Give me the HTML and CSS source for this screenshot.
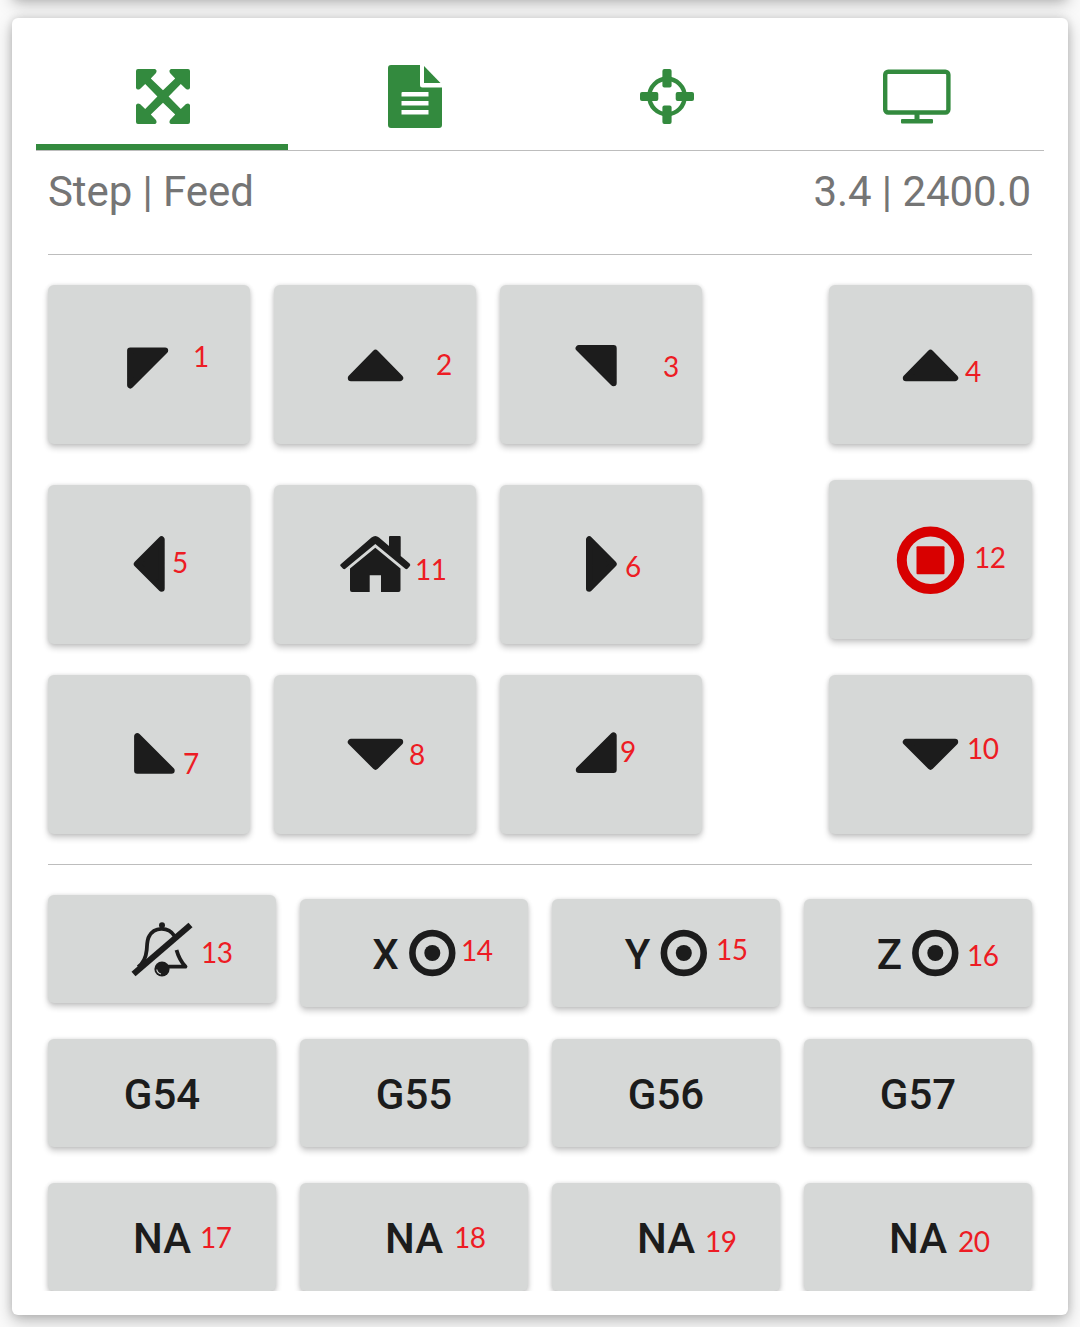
FILE: index.html
```html
<!DOCTYPE html>
<html lang="en">
<head>
<meta charset="utf-8">
<title>Jog panel</title>
<link rel="stylesheet" href="styles.css">
</head>
<body>
<div class="previous-card"></div>
<main class="card">
  <nav class="tabs">
    <a class="tab active"><svg width="54" height="55" viewBox="0 0 54 55"><path d="M2 0H19Q21.5 1 20 4L14.8 9.5 27 21.3 39.2 9.5 34 4Q32.5 1 35 0H52Q54 0 54 2V19Q53 21.5 50 20L44.8 15 32.6 27.5 44.8 40 50 35Q53 33.5 54 36V53Q54 55 52 55H35Q32.5 54 34 51L39.2 45.5 27 33.7 14.8 45.5 20 51Q21.5 54 19 55H2Q0 55 0 53V36Q1 33.5 4 35L9.2 40 21.4 27.5 9.2 15 4 20Q1 21.5 0 19V2Q0 0 2 0Z"/></svg></a>
    <a class="tab"><svg width="54" height="63" viewBox="0 0 54 63"><path fill-rule="evenodd" d="M3 0H32V20Q32 22.5 34.500 22.500H54V60Q54 63 51 63H3Q0 63 0 60V3Q0 0 3 0ZM14.500 27Q13.500 27 13.500 28V31.500H40.500V27ZM13.500 36V40.500H40.500V36ZM13.500 45V49.500H40.500V45Z"/><path d="M36 1 52.500 18H36Z"/></svg></a>
    <a class="tab"><svg width="54" height="55" viewBox="0 0 54 55"><circle class="ring" cx="27" cy="27.500" r="17.700"/><rect y="23" width="18.300" height="9" rx="2"/><rect x="35.700" y="23" width="18.300" height="9" rx="2"/><rect x="22.400" width="9.200" height="18.500" rx="2"/><rect x="22.400" y="36.500" width="9.200" height="18.500" rx="2"/></svg></a>
    <a class="tab"><svg class="screen" width="68" height="55" viewBox="0 0 68 55"><rect class="ring" x="2.200" y="2.700" width="63.200" height="40.800" rx="3"/><path d="M31.500 44H36.500V50H49Q50 50 50 51V53.500Q50 54.500 49 54.500H19Q18 54.500 18 53.500V51Q18 50 19 50H31.500Z"/></svg></a>
  </nav>
  <section class="panel">
    <div class="status"><span>Step | Feed</span><span>3.4 | 2400.0</span></div>
    <div class="jog">
      <div class="axes">
        <button class="key"><svg class="arrow" viewBox="0 0 100 80"><path d="M31.300 25.600H66L31.300 60.300Z"/></svg></button>
        <button class="key"><svg class="arrow" viewBox="0 0 100 80"><path d="M50.500 28 75 53H26Z"/></svg></button>
        <button class="key"><svg class="arrow" viewBox="0 0 100 80"><path d="M27.800 23.300H62.500V58Z"/></svg></button>
        <button class="key"><svg class="arrow" viewBox="0 0 100 80"><path d="M38 39 62.500 14.500V63.500Z"/></svg></button>
        <button class="key"><svg viewBox="0 0 100 80"><path d="M16 39 46.500 12.500Q50.300 9.500 54 12.500L64 21V12Q64 11 65 11H74.700Q75.700 11 75.700 12V31L84.600 38.500Q86 40 84.700 41.200L82.500 43.800Q81.300 44.700 80.300 43.800L50.300 19 20.300 43.800Q19.300 44.700 18.100 43.800L15.500 41Q14.500 40 16 39ZM50.300 22.700 75.500 43.500V65Q75.500 67 73.500 67H56V50.300H44.700V67H27Q25 67 25 65V43.500Z"/></svg></button>
        <button class="key"><svg class="arrow" viewBox="0 0 100 80"><path d="M62.500 39 38.200 14.500V63.500Z"/></svg></button>
        <button class="key"><svg class="arrow" viewBox="0 0 100 80"><path d="M38.300 21.300V55.500H72.500Z"/></svg></button>
        <button class="key"><svg class="arrow" viewBox="0 0 100 80"><path d="M26 27H75L50.500 51.500Z"/></svg></button>
        <button class="key"><svg class="arrow" viewBox="0 0 100 80"><path d="M62.500 20.600V54.800H28Z"/></svg></button>
      </div>
      <div class="z-axis">
        <button class="key"><svg class="arrow" viewBox="0 0 100 80"><path d="M49.500 28 74 53H25Z"/></svg></button>
        <button class="key stop"><svg viewBox="0 0 100 80"><circle class="stop-ring" cx="49.500" cy="40.300" r="28.700"/><rect x="35.500" y="26.300" width="28" height="28" rx="1"/></svg></button>
        <button class="key"><svg class="arrow" viewBox="0 0 100 80"><path d="M25 27H74L49.500 51.500Z"/></svg></button>
      </div>
    </div>
    <div class="commands">
      <button class="key mute"><svg viewBox="0 0 100 80"><circle cx="50" cy="16.200" r="3"/><g class="bell"><path d="M26 58C32 54 34 48 34.700 41C35.200 35 35 31 37 27.500C42 18 56 17 62.500 27"/><path d="M64.500 41C66.500 48 69 53 73.500 57.600H47"/></g><circle cx="50" cy="60" r="7.600"/><path class="glint" d="M44.800 60.500Q45.300 64 49 65"/><path class="slash" d="M21.500 65 78.500 16"/></svg></button>
      <button class="key">X<svg class="target" viewBox="0 0 48 48"><circle class="target-ring" cx="24.300" cy="24" r="19.900"/><circle cx="24.300" cy="24" r="8"/></svg></button>
      <button class="key">Y<svg class="target" viewBox="0 0 48 48"><circle class="target-ring" cx="24.800" cy="24" r="19.900"/><circle cx="24.800" cy="24" r="8"/></svg></button>
      <button class="key">Z<svg class="target" viewBox="0 0 48 48"><circle class="target-ring" cx="24.300" cy="24" r="19.900"/><circle cx="24.300" cy="24" r="8"/></svg></button>
      <button class="key">G54</button>
      <button class="key">G55</button>
      <button class="key">G56</button>
      <button class="key">G57</button>
      <button class="key">NA</button>
      <button class="key">NA</button>
      <button class="key">NA</button>
      <button class="key">NA</button>
    </div>
  </section>
</main>
<div class="pins">
  <span class="pin p1">1</span><span class="pin p2">2</span><span class="pin p3">3</span><span class="pin p4">4</span>
  <span class="pin p5">5</span><span class="pin p6">6</span><span class="pin p7">7</span><span class="pin p8">8</span>
  <span class="pin p9">9</span><span class="pin p10">10</span><span class="pin p11">11</span><span class="pin p12">12</span>
  <span class="pin p13">13</span><span class="pin p14">14</span><span class="pin p15">15</span><span class="pin p16">16</span>
  <span class="pin p17">17</span><span class="pin p18">18</span><span class="pin p19">19</span><span class="pin p20">20</span>
</div>
</body>
</html>
```
FILE: styles.css
```css
* { box-sizing: border-box; }
body {
  margin: 0;
  height: 1327px;
  padding: 0 12px;
  position: relative;
  overflow: hidden;
  background: #fafafa;
  font-family: Roboto, "Liberation Sans", sans-serif;
}
.previous-card, .card {
  background: #fff;
  border-radius: 6px;
  box-shadow: 0 6px 16px rgba(0, 0, 0, .25), 0 0 8px rgba(0, 0, 0, .14);
}
.previous-card { height: 20px; margin-top: -22px; }
.card { height: 1297px; margin-top: 20px; padding: 24px; }

.tabs {
  display: grid;
  grid-template-columns: repeat(4, 1fr);
  height: 109px;
  border-bottom: 1px solid #bdbdbd;
}
.tab {
  display: flex;
  align-items: center;
  justify-content: center;
  padding-left: 2px;
  border-bottom: 6px solid transparent;
  padding-top: 7px;
  fill: #338a3e;
}
.tab.active { border-bottom-color: #338a3e; }
.ring { fill: none; stroke: #338a3e; stroke-width: 4.4; }
.screen { margin-left: -4px; }

.panel { height: 1140px; padding: 16px 12px 0; overflow: hidden; }
.status {
  display: flex;
  justify-content: space-between;
  height: 88px;
  border-bottom: 1px solid #bdbdbd;
  color: #757575;
  font-size: 42px;
  line-height: 50px;
  letter-spacing: -.08px;
}
.status span:last-child { padding-right: 1px; }
.jog {
  display: flex;
  justify-content: space-between;
  height: 610px;
  padding-top: 30px;
  border-bottom: 1px solid #bdbdbd;
}
.axes {
  display: grid;
  grid-template: 200px 190px 160px / repeat(3, 202px);
  column-gap: 24px;
}
.z-axis { display: grid; grid-template: 195px 195px 160px / 203px; }
.key {
  display: flex;
  align-items: center;
  justify-content: center;
  gap: 9px;
  height: 159px;
  padding: 3px 0 0;
  border: 0;
  border-radius: 6px;
  background: #d6d8d7;
  box-shadow: 0 4px 6px rgba(0, 0, 0, .2), 0 0 4px rgba(0, 0, 0, .12);
  color: #1c1c1c;
  fill: #1c1c1c;
  font: 500 42px Roboto, "Liberation Sans", sans-serif;
}
.key svg { width: 100px; height: 80px; }
.jog .key { padding-top: 1px; }
.arrow { stroke: #1c1c1c; stroke-width: 6.4; stroke-linejoin: round; }
.stop { fill: #d80000; }
.stop-ring { fill: none; stroke: #d80000; stroke-width: 10; }

.commands {
  display: grid;
  grid-template: 140px 144px 109px / repeat(4, 1fr);
  column-gap: 24px;
  padding-top: 34px;
}
.commands .key { height: 108px; }
.commands .mute { margin-top: -4px; padding-top: 0; }
.commands .target { width: 48px; height: 48px; margin-top: -3px; }
.target-ring { fill: none; stroke: #1c1c1c; stroke-width: 6.6; }
.bell { fill: none; stroke: #1c1c1c; stroke-width: 3.8; stroke-linejoin: round; }
.slash { stroke: #1c1c1c; stroke-width: 6.2; }
.glint { fill: none; stroke: #d6d8d7; stroke-width: 1.2; }

/* numbered callouts laid over the keys */
.pins { position: absolute; inset: 0; }
.pin {
  position: absolute;
  color: #ed1c24;
  font: 28px/34px Lato, "Liberation Sans", sans-serif;
  letter-spacing: -.6px;
}
.p1 { left: 193px; top: 339px; }
.p2 { left: 436px; top: 347px; }
.p3 { left: 663px; top: 349px; }
.p4 { left: 965px; top: 354px; }
.p5 { left: 172px; top: 545px; }
.p6 { left: 625px; top: 549px; }
.p7 { left: 183px; top: 746px; }
.p8 { left: 409px; top: 737px; }
.p9 { left: 620px; top: 734px; }
.p10 { left: 967px; top: 731px; }
.p11 { left: 415px; top: 552px; }
.p12 { left: 974px; top: 540px; }
.p13 { left: 201px; top: 935px; }
.p14 { left: 461px; top: 933px; }
.p15 { left: 716px; top: 932px; }
.p16 { left: 967px; top: 938px; }
.p17 { left: 200px; top: 1220px; }
.p18 { left: 454px; top: 1220px; }
.p19 { left: 705px; top: 1224px; }
.p20 { left: 958px; top: 1224px; }
```
